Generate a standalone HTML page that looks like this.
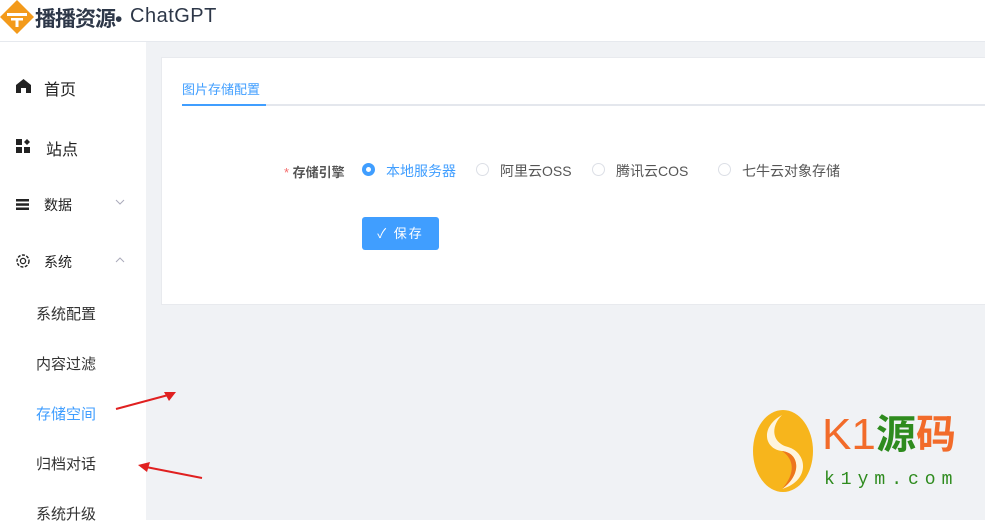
<!DOCTYPE html>
<html><head><meta charset="utf-8"><style>
*{margin:0;padding:0;box-sizing:border-box}
body{width:985px;height:520px;overflow:hidden;background:#fff;font-family:"Liberation Sans","Noto Sans CJK SC",sans-serif;position:relative}
.hdr{position:absolute;left:0;top:0;width:985px;height:42px;background:#fff;border-bottom:1px solid #e6e9ee}
.main{position:absolute;left:146px;top:42px;width:839px;height:478px;background:#f0f2f5}
.card{position:absolute;left:161px;top:57px;width:830px;height:248px;background:#fff;border:1px solid #e8eaee}
.t{position:absolute;white-space:nowrap}
.side{font-size:16px;color:#222}
.sub{font-size:15px;color:#333}
.radio{position:absolute;width:13px;height:13px;border-radius:50%;border:1px solid #dcdfe6;background:#fff}
</style></head><body>
<div class="hdr"></div>
<svg class="t" style="left:0;top:0" width="34" height="36" viewBox="0 0 34 36"><path d="M17 0 L34 17 L17 34 L0 17Z" fill="#f39a1b"/><rect x="7" y="13" width="20" height="3" fill="#fff"/><rect x="11" y="18" width="12" height="2.5" fill="#fff"/><rect x="15.5" y="18" width="3" height="9" fill="#fff"/></svg>
<div class="t" style="left:35px;top:3px;font-size:21px;font-weight:bold;color:#2d3748;letter-spacing:-1px">播播资源<span style="font-weight:normal">•</span></div>
<div class="t" style="left:130px;top:5px;font-size:20px;color:#2d3748;letter-spacing:0.5px">ChatGPT</div>

<svg class="t" style="left:16px;top:79px" width="15" height="14" viewBox="0 0 15 14"><path d="M7.5 0 L15 6 V14 H10 V9 H5 V14 H0 V6Z" fill="#222"/></svg>
<div class="t side" style="left:44px;top:76px">首页</div>
<svg class="t" style="left:16px;top:139px" width="15" height="14"><rect x="0" y="0" width="6" height="6" fill="#222"/><rect x="0" y="8" width="6" height="6" fill="#222"/><rect x="8" y="8" width="6" height="6" fill="#222"/><path d="M11 0 L14 3 L11 6 L8 3Z" fill="#222"/></svg>
<div class="t side" style="left:46px;top:136px">站点</div>
<svg class="t" style="left:16px;top:199px" width="13" height="11"><rect y="0" width="13" height="2.5" fill="#222"/><rect y="4.3" width="13" height="2.5" fill="#222"/><rect y="8.5" width="13" height="2.5" fill="#222"/></svg>
<div class="t" style="left:44px;top:195px;font-size:14px;color:#222">数据</div>
<svg class="t" style="left:115px;top:199px" width="10" height="6"><path d="M1 1 L5 5 L9 1" stroke="#aab" fill="none"/></svg>
<svg class="t" style="left:15px;top:253px" width="16" height="16" viewBox="0 0 16 16"><circle cx="8" cy="8" r="6" stroke="#222" stroke-width="1.4" fill="none" stroke-dasharray="3 1.5"/><circle cx="8" cy="8" r="2.6" stroke="#222" stroke-width="1.3" fill="none"/></svg>
<div class="t" style="left:44px;top:252px;font-size:14px;color:#222">系统</div>
<svg class="t" style="left:115px;top:257px" width="10" height="6"><path d="M1 5 L5 1 L9 5" stroke="#aab" fill="none"/></svg>
<div class="t sub" style="left:36px;top:303px">系统配置</div>
<div class="t sub" style="left:36px;top:353px">内容过滤</div>
<div class="t sub" style="left:36px;top:403px;color:#409eff">存储空间</div>
<div class="t sub" style="left:36px;top:453px">归档对话</div>
<div class="t sub" style="left:36px;top:503px">系统升级</div>

<div class="main"></div>
<div class="card"></div>
<div class="t" style="left:182px;top:79px;font-size:13px;color:#409eff">图片存储配置</div>
<div class="t" style="left:182px;top:104px;width:803px;height:2px;background:#e4e7ed"></div>
<div class="t" style="left:182px;top:104px;width:84px;height:2px;background:#409eff"></div>

<div class="t" style="left:284px;top:162px;font-size:13px;color:#555;font-weight:bold"><span style="color:#f56c6c;font-weight:normal">*</span> 存储引擎</div>
<div class="radio" style="left:362px;top:163px;border:4px solid #409eff;width:13px;height:13px"></div>
<div class="t" style="left:386px;top:161px;font-size:14px;color:#409eff">本地服务器</div>
<div class="radio" style="left:476px;top:163px"></div>
<div class="t" style="left:500px;top:161px;font-size:14px;color:#555">阿里云OSS</div>
<div class="radio" style="left:592px;top:163px"></div>
<div class="t" style="left:616px;top:161px;font-size:14px;color:#555">腾讯云COS</div>
<div class="radio" style="left:718px;top:163px"></div>
<div class="t" style="left:742px;top:161px;font-size:14px;color:#555">七牛云对象存储</div>

<div class="t" style="left:362px;top:217px;width:77px;height:33px;background:#409eff;border-radius:3px;color:#fff;font-size:13px;line-height:33px;text-align:center;letter-spacing:2px">✓ 保存</div>

<svg class="t" style="left:112px;top:388px" width="66" height="26"><line x1="4" y1="21" x2="60" y2="6" stroke="#e02020" stroke-width="2"/><path d="M64 4 L52 4 L57 13Z" fill="#e02020"/></svg>
<svg class="t" style="left:136px;top:458px" width="70" height="24"><line x1="66" y1="20" x2="10" y2="9" stroke="#e02020" stroke-width="2"/><path d="M2 7 L14 4 L11 14Z" fill="#e02020"/></svg>

<svg class="t" style="left:752px;top:409px" width="62" height="84" viewBox="0 0 62 84"><ellipse cx="31" cy="42" rx="30" ry="41" fill="#f7b51c"/><path d="M30 6 C8 18 12 40 30 42 C48 44 50 66 30 80 C58 72 56 44 36 38 C20 34 18 18 30 6Z" fill="#fff" opacity="0.85"/><path d="M30 42 C48 44 50 66 30 80 C44 64 42 50 30 42Z" fill="#e85a1c" opacity="0.7"/></svg>
<div class="t" style="left:822px;top:410px;font-size:44px;color:#f26b2a;line-height:50px;font-family:'Liberation Sans',sans-serif">K1</div>
<div class="t" style="left:876px;top:410px;font-size:40px;font-weight:bold;color:#2e8b1e;line-height:50px">源</div>
<div class="t" style="left:916px;top:410px;font-size:40px;font-weight:bold;color:#f26b2a;line-height:50px">码</div>
<div class="t" style="left:824px;top:470px;font-size:18px;color:#2e8b1e;letter-spacing:6px;font-family:'Liberation Mono',monospace">k1ym.com</div>
</body></html>
